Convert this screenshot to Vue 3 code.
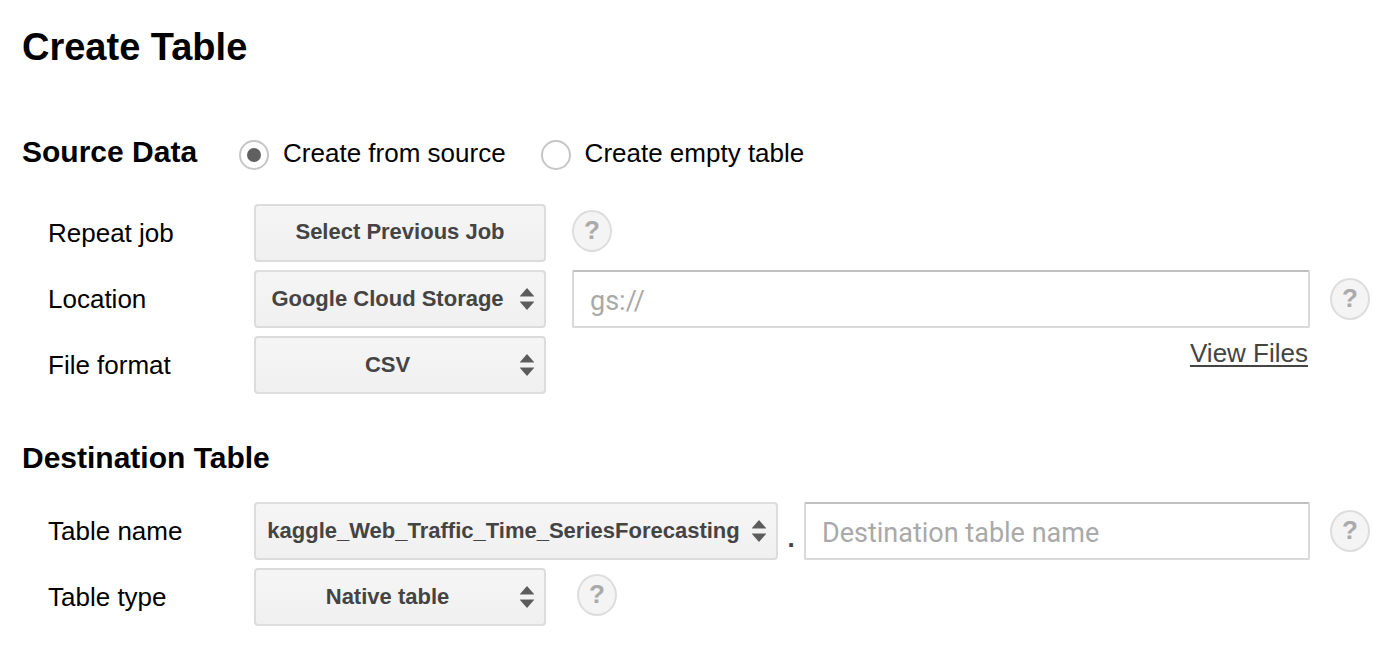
<script setup>
import { ref } from 'vue'

const source = ref('source')
const location = ref('Google Cloud Storage')
const format = ref('CSV')
const dataset = ref('kaggle_Web_Traffic_Time_SeriesForecasting')
const tableType = ref('Native table')
const uri = ref('')
const tableName = ref('')
</script>

<template>
  <form class="page" @submit.prevent>
    <h1>Create Table</h1>

    <section class="source">
      <div class="section-head">
        <h2>Source Data</h2>
        <label class="choice">
          <input v-model="source" type="radio" name="source" value="source" />
          <span>Create from source</span>
        </label>
        <label class="choice">
          <input v-model="source" type="radio" name="source" value="empty" />
          <span>Create empty table</span>
        </label>
      </div>

      <div class="rows">
        <div class="row">
          <label class="name" for="repeat">Repeat job</label>
          <button id="repeat" class="control" type="button">Select Previous Job</button>
          <button class="help raised after-control" type="button" aria-label="Help for repeat job">?</button>
        </div>
        <div class="row">
          <label class="name" for="location">Location</label>
          <div class="picker">
            <select id="location" v-model="location" class="control">
              <option>Google Cloud Storage</option>
            </select>
            <svg class="arrows" width="14" height="22" viewBox="0 0 14 22">
              <path d="M7 0L14 8H0ZM0 14H14L7 22Z" fill="#5c5c5c" />
              <path d="M0 8H14V9H0ZM0 13H14V14H0Z" fill="#aaa" />
            </svg>
          </div>
          <input v-model="uri" class="field after-control" type="text" placeholder="gs://" aria-label="Storage location" />
          <button class="help after-field" type="button" aria-label="Help for location">?</button>
        </div>
        <div class="row">
          <label class="name" for="format">File format</label>
          <div class="picker">
            <select id="format" v-model="format" class="control">
              <option>CSV</option>
            </select>
            <svg class="arrows" width="14" height="22" viewBox="0 0 14 22">
              <path d="M7 0L14 8H0ZM0 14H14L7 22Z" fill="#5c5c5c" />
              <path d="M0 8H14V9H0ZM0 13H14V14H0Z" fill="#aaa" />
            </svg>
          </div>
          <a class="files" href="#">View Files</a>
        </div>
      </div>
    </section>

    <section class="destination">
      <h2>Destination Table</h2>
      <div class="rows">
        <div class="row">
          <label class="name" for="dataset">Table name</label>
          <div class="picker">
            <select id="dataset" v-model="dataset" class="control">
              <option>kaggle_Web_Traffic_Time_SeriesForecasting</option>
            </select>
            <svg class="arrows" width="14" height="22" viewBox="0 0 14 22">
              <path d="M7 0L14 8H0ZM0 14H14L7 22Z" fill="#5c5c5c" />
              <path d="M0 8H14V9H0ZM0 13H14V14H0Z" fill="#aaa" />
            </svg>
          </div>
          <span class="dot">.</span>
          <input v-model="tableName" class="field" type="text" placeholder="Destination table name" aria-label="Destination table name" />
          <button class="help after-field" type="button" aria-label="Help for table name">?</button>
        </div>
        <div class="row">
          <label class="name" for="type">Table type</label>
          <div class="picker">
            <select id="type" v-model="tableType" class="control">
              <option>Native table</option>
            </select>
            <svg class="arrows" width="14" height="22" viewBox="0 0 14 22">
              <path d="M7 0L14 8H0ZM0 14H14L7 22Z" fill="#5c5c5c" />
              <path d="M0 8H14V9H0ZM0 13H14V14H0Z" fill="#aaa" />
            </svg>
          </div>
          <button class="help raised after-picker" type="button" aria-label="Help for table type">?</button>
        </div>
      </div>
    </section>
  </form>
</template>

<style>
body {
  background: #fff;
}
</style>

<style scoped>
.page {
  padding: 24px 4px 24px 22px;
  color: #000;
  font-family: "Liberation Sans", Arial, sans-serif;
  font-size: 26px;
  line-height: 30px;
}
h1,
h2 {
  margin: 0;
  font-weight: bold;
}
h1 {
  font-size: 38px;
  line-height: 46px;
}
h2 {
  font-size: 30px;
  line-height: 36px;
}
.source {
  margin-top: 64px;
}
.destination {
  margin-top: 46px;
}
.section-head {
  display: flex;
  align-items: flex-start;
}
.choice {
  display: flex;
  gap: 14px;
  margin-left: 35px;
  padding-top: 4px;
}
h2 + .choice {
  margin-left: 42px;
}
.choice input {
  appearance: none;
  display: grid;
  place-items: center;
  flex: none;
  box-sizing: border-box;
  width: 30px;
  height: 30px;
  margin: 2px 0 0;
  border: 2px solid #c6c6c6;
  border-radius: 50%;
  background: #fff;
}
.choice input:checked::before {
  content: "";
  width: 14px;
  height: 14px;
  border-radius: 50%;
  background: #606060;
}
.rows {
  display: grid;
  gap: 8px;
  margin-top: 26px;
}
.source .rows {
  margin-top: 34px;
}
.row {
  display: flex;
  align-items: center;
  height: 58px;
}
.name {
  flex: none;
  box-sizing: border-box;
  width: 232px;
  padding-left: 26px;
}
.picker {
  position: relative;
  flex: none;
}
.control {
  appearance: none;
  display: block;
  box-sizing: border-box;
  min-width: 292px;
  height: 58px;
  margin: 0;
  padding: 0 12px 2px;
  border: 2px solid #dcdcdc;
  border-radius: 4px;
  background: linear-gradient(#f5f5f5, #f0f0f0);
  color: #444;
  font: bold 22px "Liberation Sans", Arial, sans-serif;
  text-align: center;
  text-align-last: center;
}
select.control {
  padding: 0 36px 2px 11px;
}
.arrows {
  position: absolute;
  top: 18px;
  right: 12px;
  pointer-events: none;
}
.field {
  flex: 1;
  min-width: 0;
  box-sizing: border-box;
  height: 58px;
  margin: 0;
  padding: 4px 16px 0;
  border: 2px solid #d9d9d9;
  border-top-color: #c0c0c0;
  border-radius: 2px;
  background: #fff;
  color: #333;
  font: 27px Roboto, "Liberation Sans", sans-serif;
  outline: none;
}
.field::placeholder {
  color: #a9a9a9;
  opacity: 1;
}
.help {
  flex: none;
  box-sizing: border-box;
  width: 40px;
  height: 42px;
  padding: 0 0 2px;
  border: 2px solid #ddd;
  border-radius: 50%;
  background: #f4f4f4;
  color: #aaa;
  font: bold 26px "Liberation Sans", Arial, sans-serif;
}
.raised {
  margin-bottom: 4px;
}
.after-control {
  margin-left: 26px;
}
.after-picker {
  margin-left: 31px;
}
.after-field {
  margin-left: 20px;
}
.files {
  align-self: flex-start;
  margin: 2px 62px 0 auto;
  color: #444;
  text-decoration-thickness: 2px;
  text-underline-offset: 3px;
}
.dot {
  flex: none;
  width: 26px;
  padding-top: 14px;
  color: #444;
  font-weight: bold;
  text-align: center;
}
</style>
